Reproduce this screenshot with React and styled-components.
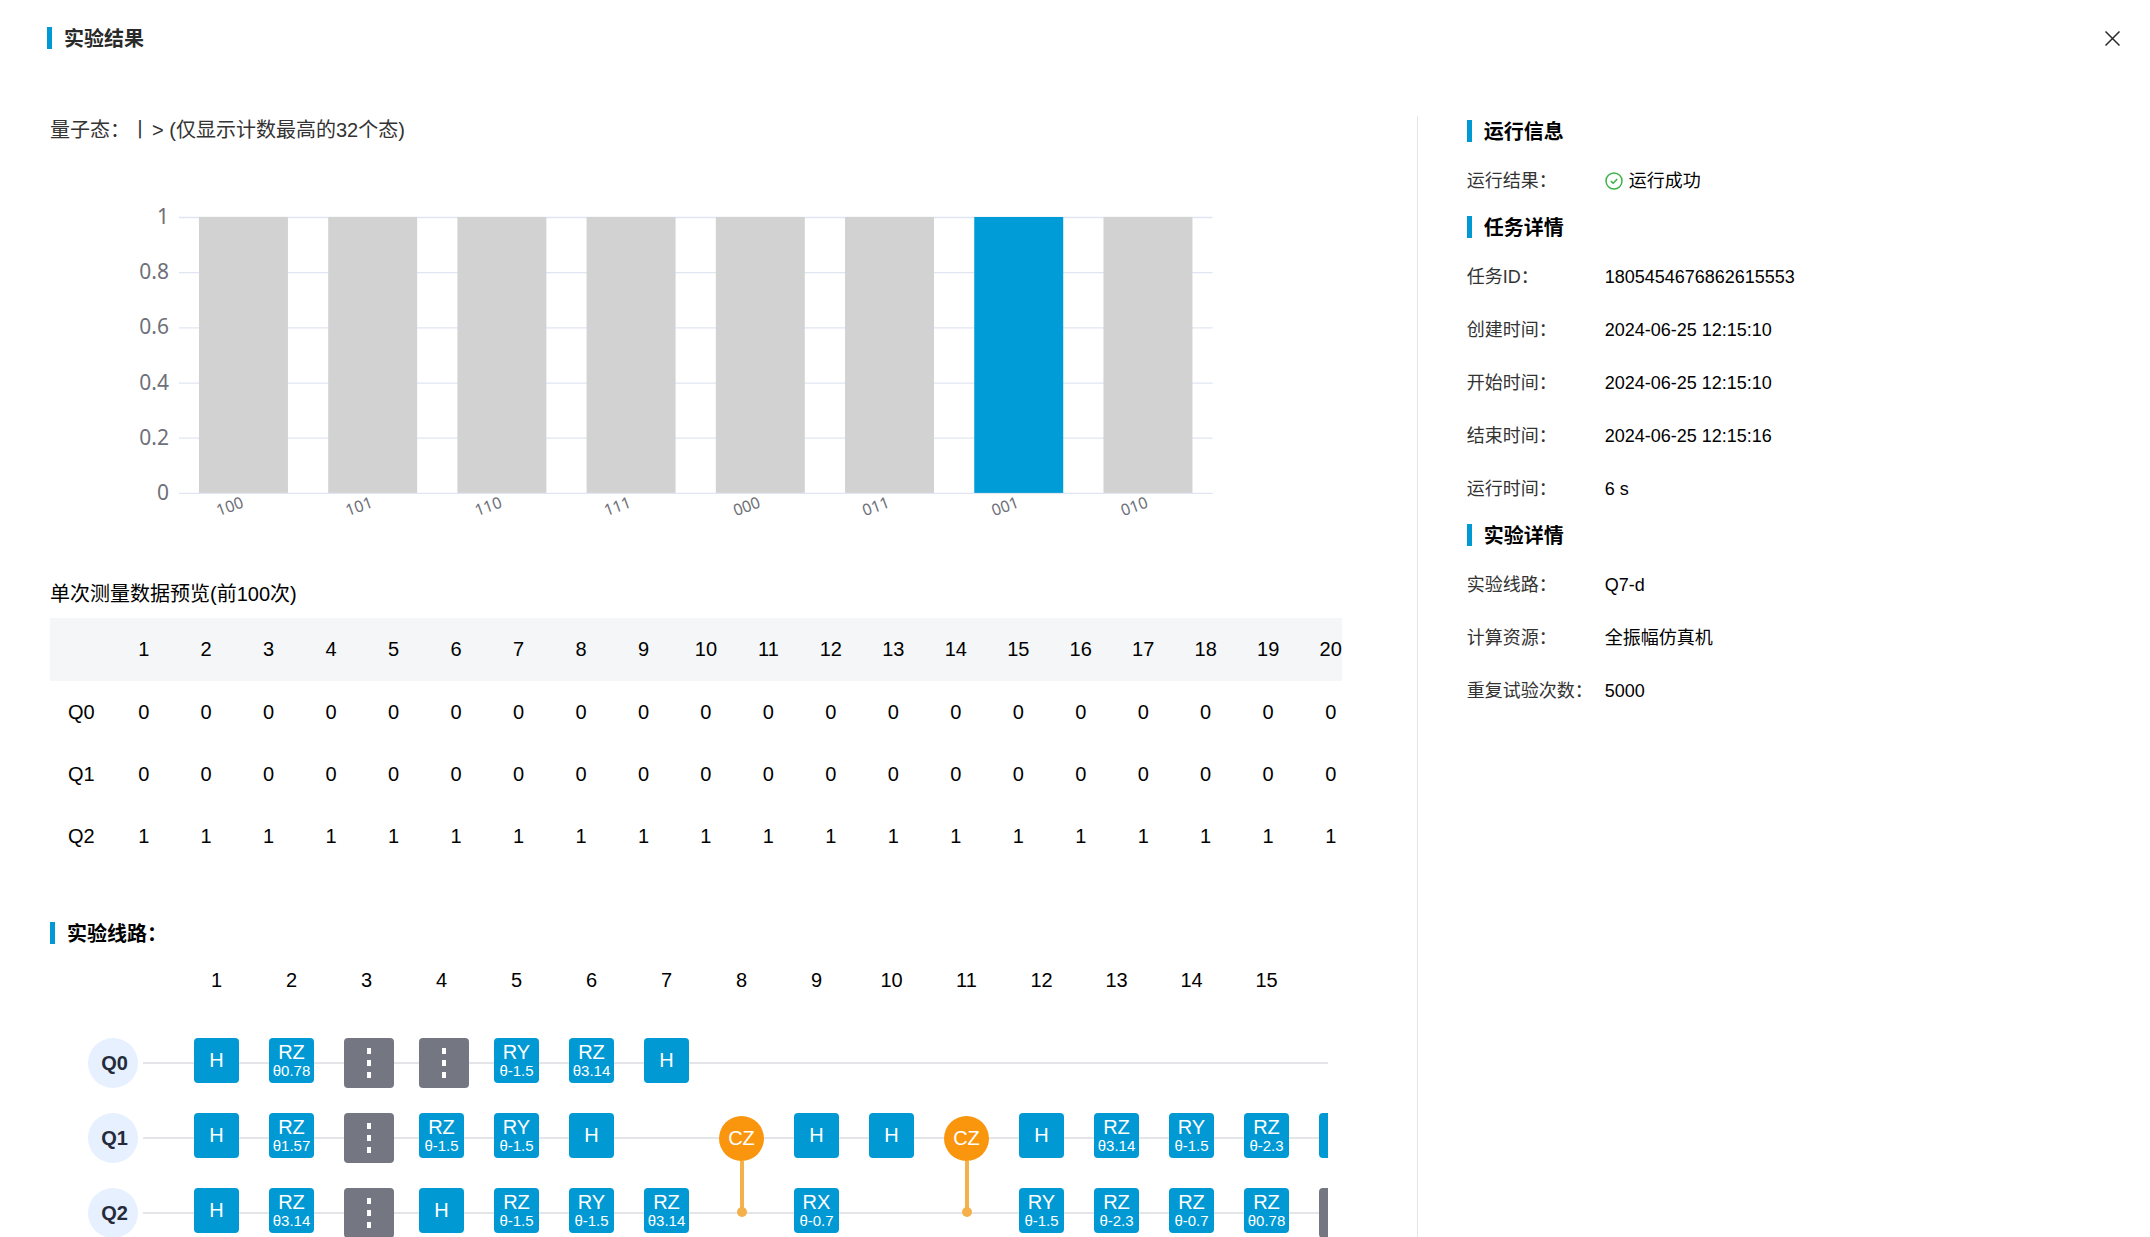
import React from "react";
import styled, { createGlobalStyle } from "styled-components";

const BLUE = "#0099d4";

const GlobalStyle = createGlobalStyle`
  * { box-sizing: border-box; }
  html, body { margin: 0; background: #fff; }
  body {
    font-family: "Liberation Sans", "Noto Sans CJK SC", sans-serif;
    font-size: 20px;
    line-height: 28px;
    color: #000;
  }
`;

const Dialog = styled.section`
  display: flex;
  flex-direction: column;
  height: 100vh;
  overflow: hidden;
`;

const Header = styled.header`
  display: flex;
  flex: none;
  align-items: center;
  justify-content: space-between;
  height: 76px;
  padding: 0 30px 0 47px;
  color: #2a2a2a;
`;

const Heading = styled.h2`
  display: flex;
  align-items: flex-start;
  gap: 12px;
  height: 22px;
  margin: 0;
  font-size: 20px;
  line-height: 25px;
  font-weight: 700;
  &::before {
    content: "";
    width: 5px;
    height: 22px;
    background: ${BLUE};
  }
`;

const CloseButton = styled.button`
  display: flex;
  padding: 0;
  border: 0;
  background: none;
  color: #2a2a2a;
  cursor: pointer;
`;

const Body = styled.div`
  display: grid;
  grid-template-columns: 2fr 1fr;
  flex: 1;
  min-height: 0;
  padding: 40px 50px 0;
`;

const Main = styled.main`
  min-width: 0;
  min-height: 0;
  padding-right: 75px;
`;

const Aside = styled.aside`
  padding: 4px 0 0 49px;
  border-left: 1px solid #e4e5e8;
`;

const StateLine = styled.p`
  margin: 0;
  color: #333;
`;

const Ket = styled.span`
  margin-right: 2px;
`;

const Chart = styled.svg`
  display: block;
  width: 100%;
  height: auto;
  font-family: "Noto Sans", sans-serif;
  fill: #6e7079;
`;

const Caption = styled.h3`
  margin: 0 0 10px;
  font-size: 20px;
  line-height: 28px;
  font-weight: 400;
`;

const Scroller = styled.div`
  overflow: hidden;
`;

const Table = styled.table`
  width: 1312px;
  table-layout: fixed;
  border-collapse: collapse;
  text-align: center;
  th, td {
    height: 62px;
    padding: 0;
    font-weight: 400;
  }
  thead th, thead td {
    height: 63px;
    background: #f4f6f8;
  }
`;

const CircuitSection = styled.section`
  margin-top: 55px;
`;

const Circuit = styled.div`
  margin: 22px 14px 0 0;
  padding-left: 38px;
  overflow: hidden;
`;

const Steps = styled.div`
  display: flex;
  padding-left: 91px;
  margin-bottom: 44px;
`;

const Step = styled.span`
  flex: none;
  width: 75px;
  text-align: center;
`;

const Wire = styled.div`
  display: flex;
  gap: 5px;
  height: 75px;
`;

const Qubit = styled.div`
  display: flex;
  flex: none;
  align-items: center;
  justify-content: center;
  width: 50px;
  height: 50px;
  padding-left: 3px;
  border-radius: 50%;
  background: #e6f0ff;
  color: #252b3a;
  font-weight: 700;
`;

const Track = styled.div`
  display: flex;
  flex: 1;
  min-width: 0;
  padding-left: 36px;
  background: linear-gradient(#e4e5e8, #e4e5e8) 0 24px / 100% 2px no-repeat;
`;

const Cell = styled.div`
  flex: none;
  width: 75px;
  padding-left: 15px;
`;

const Gate = styled.div`
  display: flex;
  flex-direction: column;
  align-items: center;
  justify-content: center;
  width: 45px;
  height: 45px;
  border-radius: 4px;
  background: ${BLUE};
  color: #fff;
  line-height: 22px;
`;

const Theta = styled.small`
  font-size: 15px;
  line-height: 16px;
`;

const Barrier = styled.div`
  display: flex;
  flex-direction: column;
  align-items: center;
  justify-content: center;
  gap: 6px;
  width: 50px;
  height: 50px;
  border-radius: 4px;
  background: #747681;
`;

const Dash = styled.i`
  width: 4px;
  height: 6px;
  background: #fff;
`;

const Control = styled.div`
  position: relative;
  display: flex;
  align-items: center;
  justify-content: center;
  width: 45px;
  height: 45px;
  margin-top: 3px;
  border-radius: 50%;
  background: #fa950e;
  color: #fff;
  &::before, &::after {
    content: "";
    position: absolute;
    background: #f3b04b;
  }
  &::before {
    top: 45px;
    left: 21px;
    width: 4px;
    height: 48px;
  }
  &::after {
    top: 91px;
    left: 18px;
    width: 10px;
    height: 10px;
    border-radius: 50%;
  }
`;

const InfoSection = styled.section`
  & + & { margin-top: 9px; }
`;

const InfoList = styled.dl`
  margin: 12px 0 0;
  font-size: 18px;
`;

const InfoRow = styled.div`
  display: flex;
  align-items: center;
  height: 53px;
`;

const Label = styled.dt`
  flex: none;
  width: 138px;
  color: #333;
  white-space: nowrap;
`;

const Value = styled.dd`
  display: flex;
  align-items: center;
  gap: 6px;
  margin: 0;
`;

const states = ["100", "101", "110", "111", "000", "011", "001", "010"];
const ticks = ["1", "0.8", "0.6", "0.4", "0.2", "0"];
const shots = Array.from({ length: 20 }, (_, i) => i + 1);
const results = [
  ["Q0", 0],
  ["Q1", 0],
  ["Q2", 1],
];
const steps = Array.from({ length: 15 }, (_, i) => i + 1);

const H = ["H"];
const B = ["barrier"];
const wires = [
  ["Q0", [H, ["RZ", "0.78"], B, B, ["RY", "-1.5"], ["RZ", "3.14"], H]],
  ["Q1", [H, ["RZ", "1.57"], B, ["RZ", "-1.5"], ["RY", "-1.5"], H, null, ["CZ"], H, H, ["CZ"], H,
    ["RZ", "3.14"], ["RY", "-1.5"], ["RZ", "-2.3"], [""]]],
  ["Q2", [H, ["RZ", "3.14"], B, H, ["RZ", "-1.5"], ["RY", "-1.5"], ["RZ", "3.14"], null, ["RX", "-0.7"], null,
    null, ["RY", "-1.5"], ["RZ", "-2.3"], ["RZ", "-0.7"], ["RZ", "0.78"], B]],
];

const info = [
  ["运行信息", [["运行结果：", "运行成功", true]]],
  ["任务详情", [
    ["任务ID：", "1805454676862615553"],
    ["创建时间：", "2024-06-25 12:15:10"],
    ["开始时间：", "2024-06-25 12:15:10"],
    ["结束时间：", "2024-06-25 12:15:16"],
    ["运行时间：", "6 s"],
  ]],
  ["实验详情", [
    ["实验线路：", "Q7-d"],
    ["计算资源：", "全振幅仿真机"],
    ["重复试验次数：", "5000"],
  ]],
];

function StateChart() {
  const left = 129;
  const right = 1163;
  const top = 73;
  const height = 276;
  const pitch = (right - left) / states.length;
  return (
    <Chart viewBox="0 0 1292 436" role="img" aria-label="量子态">
      {ticks.map((t, i) => {
        const y = top + (height / 5) * i;
        return (
          <g key={t}>
            <line x1={left} x2={right} y1={y + 0.5} y2={y + 0.5} stroke="#e0e6f1" strokeWidth="1.3" />
            <text x="119" y={y + 7} textAnchor="end" fontSize="21">{t}</text>
          </g>
        );
      })}
      {states.map((s, i) => {
        const x = left + pitch * i;
        return (
          <g key={s}>
            <rect x={x + 20} y={top} width="89" height={height} fill={s === "001" ? "#009cd7" : "#d2d2d2"} />
            <text transform={`translate(${x + pitch / 2 + 1} ${top + height + 14}) rotate(-20)`} textAnchor="end" fontSize="16">
              {s}
            </text>
          </g>
        );
      })}
    </Chart>
  );
}

function CircuitCell({ gate }) {
  if (!gate) return <Cell />;
  const [name, theta] = gate;
  if (name === "barrier") {
    return <Cell><Barrier><Dash /><Dash /><Dash /></Barrier></Cell>;
  }
  if (name === "CZ") return <Cell><Control>CZ</Control></Cell>;
  return (
    <Cell>
      <Gate>
        {name}
        {theta && <Theta>θ{theta}</Theta>}
      </Gate>
    </Cell>
  );
}

export default function App() {
  return (
    <>
      <GlobalStyle />
      <Dialog>
        <Header>
          <Heading as="h1">实验结果</Heading>
          <CloseButton type="button" aria-label="关闭">
            <svg width="15" height="15" viewBox="0 0 15 15" stroke="currentColor" strokeWidth="1.5">
              <path d="M0.5 0.5 14.5 14.5M14.5 0.5 0.5 14.5" />
            </svg>
          </CloseButton>
        </Header>
        <Body>
          <Main>
            <StateLine>
              量子态：<Ket>丨</Ket>&gt; (仅显示计数最高的32个态)
            </StateLine>
            <StateChart />
            <Caption>单次测量数据预览(前100次)</Caption>
            <Scroller>
              <Table>
                <thead>
                  <tr>
                    <td />
                    {shots.map((n) => <th key={n} scope="col">{n}</th>)}
                  </tr>
                </thead>
                <tbody>
                  {results.map(([q, v]) => (
                    <tr key={q}>
                      <th scope="row">{q}</th>
                      {shots.map((n) => <td key={n}>{v}</td>)}
                    </tr>
                  ))}
                </tbody>
              </Table>
            </Scroller>
            <CircuitSection>
              <Heading>实验线路：</Heading>
              <Circuit>
                <Steps>
                  {steps.map((n) => <Step key={n}>{n}</Step>)}
                </Steps>
                {wires.map(([q, gates]) => (
                  <Wire key={q}>
                    <Qubit>{q}</Qubit>
                    <Track>
                      {gates.map((g, i) => <CircuitCell key={i} gate={g} />)}
                    </Track>
                  </Wire>
                ))}
              </Circuit>
            </CircuitSection>
          </Main>
          <Aside>
            {info.map(([title, rows]) => (
              <InfoSection key={title}>
                <Heading>{title}</Heading>
                <InfoList>
                  {rows.map(([label, value, ok]) => (
                    <InfoRow key={label}>
                      <Label>{label}</Label>
                      <Value>
                        {ok && (
                          <svg width="18" height="18" viewBox="0 0 18 18" fill="none" stroke="#3bb346" strokeWidth="1.5">
                            <circle cx="9" cy="9" r="8" />
                            <path d="M5.8 9.2 8.2 11.2 12.2 7" />
                          </svg>
                        )}
                        {value}
                      </Value>
                    </InfoRow>
                  ))}
                </InfoList>
              </InfoSection>
            ))}
          </Aside>
        </Body>
      </Dialog>
    </>
  );
}
